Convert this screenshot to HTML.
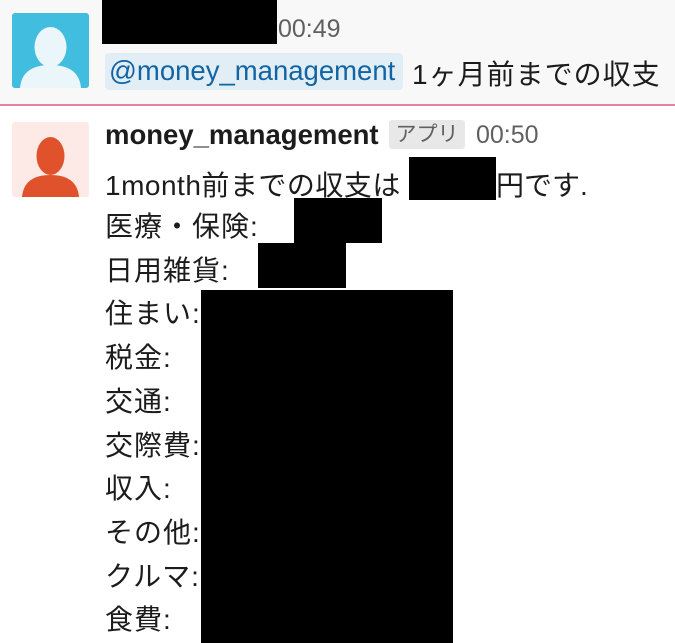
<!DOCTYPE html>
<html><head><meta charset="utf-8"><style>
body{margin:0;width:675px;height:643px;overflow:hidden;background:#fff;font-family:"Liberation Sans","Noto Sans CJK JP",sans-serif;color:#1d1c1d;position:relative}
.top{position:absolute;left:0;top:0;width:675px;height:104px;background:#f8f8f8;border-bottom:2px solid #e8809f}
.abs{position:absolute;white-space:nowrap}
.blk{position:absolute;background:#000}
.t{font-size:28px}
</style></head><body>
<div class="top"></div>
<svg class="abs" style="left:12px;top:13px" width="77" height="75" viewBox="0 0 77 75"><rect width="77" height="75" rx="3" fill="#41bde0"/><ellipse cx="38.5" cy="34" rx="16" ry="20" fill="#ebf6fb"/><path d="M8 75 Q10 52 38.5 52 Q67 52 69 75Z" fill="#ebf6fb"/></svg>
<div class="blk" style="left:102px;top:0;width:175px;height:44px"></div>
<div class="abs" style="left:278px;top:15px;font-size:25px;color:#616061">00:49</div>
<div class="abs" style="left:105px;top:53px;width:298px;height:37px;background:#e1eef5;border-radius:4px"></div>
<div class="abs" style="left:109px;top:55px;color:#1264a3;font-size:27.5px">@money_management</div>
<div class="abs t" style="left:412px;top:53px;letter-spacing:1px">1ヶ月前までの収支</div>
<svg class="abs" style="left:12px;top:122px" width="77" height="75" viewBox="0 0 77 75"><rect width="77" height="75" rx="3" fill="#fde9e6"/><ellipse cx="38.5" cy="34" rx="14" ry="19" fill="#e0522c"/><path d="M10 75 Q12 53 38.5 53 Q65 53 67 75Z" fill="#e0522c"/></svg>
<div class="abs" style="left:105px;top:119px;font-weight:bold;font-size:27.5px">money_management</div>
<div class="abs" style="left:389px;top:120px;width:76px;height:29px;background:#e8e8e8;border-radius:3px;font-size:21px;color:#616061;text-align:center;line-height:29px">アプリ</div>
<div class="abs" style="left:476px;top:121px;font-size:25px;color:#616061">00:50</div>
<div class="abs t" style="left:105px;top:164px;letter-spacing:0.5px">1month前までの収支は</div>
<div class="abs t" style="left:496px;top:164px">円です.</div>
<div class="blk" style="left:409px;top:157px;width:87px;height:43px"></div>
<div class="abs t" style="left:105px;top:205px;line-height:43.7px;letter-spacing:1px">医療・保険:<br>日用雑貨:<br>住まい:<br>税金:<br>交通:<br>交際費:<br>収入:<br>その他:<br>クルマ:<br>食費:</div>
<div class="blk" style="left:294px;top:198px;width:88px;height:45px"></div>
<div class="blk" style="left:258px;top:243px;width:88px;height:45px"></div>
<div class="blk" style="left:201px;top:290px;width:252px;height:353px"></div>
</body></html>
